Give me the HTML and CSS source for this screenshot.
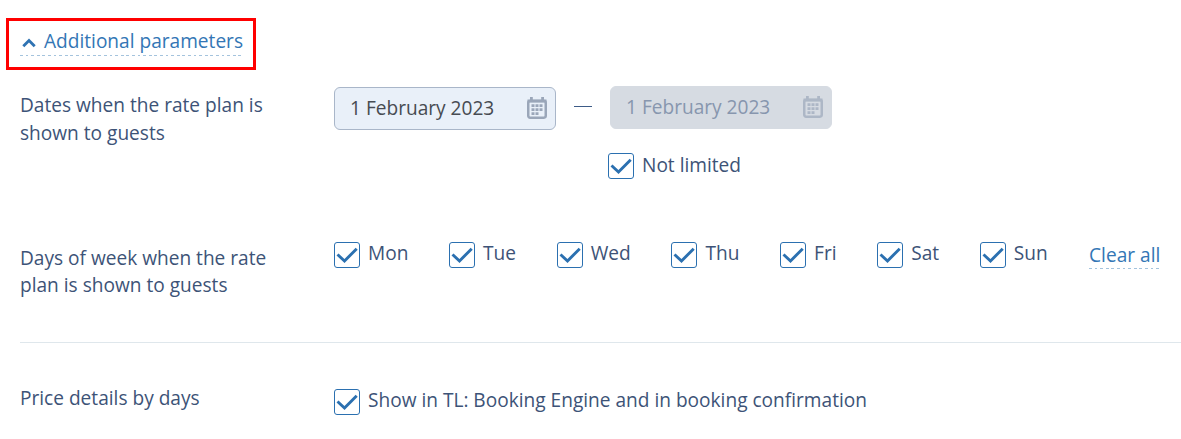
FILE: index.html
```
<!DOCTYPE html>
<html>
	<head>
		<meta charset="UTF-8">
		<title>Rate plan</title>
		<meta name="viewport" content="width=device-width, initial-scale=1.0">
		<link rel="stylesheet" href="styles.css">
	</head>
	<body>
		<svg class="defs">
			<symbol id="check" viewBox="1 1 24 24">
				<path d="M3.5 12.5L10.5 19L22.7 6.7" fill="none" stroke="#2b70b0" stroke-width="2.9"/>
			</symbol>
			<symbol id="calendar" viewBox="0 0 20 22">
				<rect x="1.25" y="4.05" width="17.5" height="16.6" rx="1.8" fill="none" stroke="currentColor" stroke-width="2.5"/>
				<path d="M0.5 4h19M4.4 0v5M15.6 0v5" fill="none" stroke="currentColor" stroke-width="2.8"/>
				<path d="M4.5 8.7h3M8.5 8.7h3M12.5 8.7h3M4.5 12.7h3M8.5 12.7h3M12.5 12.7h3M4.5 16.7h3M8.5 16.7h3" fill="none" stroke="currentColor" stroke-width="2.8"/>
			</symbol>
		</svg>

		<div class="toggle-frame">
			<a class="link toggle">
				<svg class="arrow" viewBox="0 0 14 10"><path d="M1.3 8.3L7 2.6L12.7 8.3" fill="none" stroke="#2f73b3" stroke-width="2.8"/></svg>
				<span>Additional parameters</span>
			</a>
		</div>

		<div class="row row-dates">
			<div class="label">Dates when the rate plan is shown to guests</div>
			<div class="dates">
				<div class="date">
					<span>1 February 2023</span>
					<svg class="calendar"><use href="#calendar"/></svg>
				</div>
				<div class="dash"></div>
				<div class="date-end">
					<div class="date disabled">
						<span>1 February 2023</span>
						<svg class="calendar"><use href="#calendar"/></svg>
					</div>
					<label class="checkbox"><svg class="box"><use href="#check"/></svg><span>Not limited</span></label>
				</div>
			</div>
		</div>

		<div class="row row-days">
			<div class="label">Days of week when the rate plan is shown to guests</div>
			<div class="days">
				<label class="checkbox"><svg class="box"><use href="#check"/></svg><span>Mon</span></label>
				<label class="checkbox"><svg class="box"><use href="#check"/></svg><span>Tue</span></label>
				<label class="checkbox"><svg class="box"><use href="#check"/></svg><span>Wed</span></label>
				<label class="checkbox"><svg class="box"><use href="#check"/></svg><span>Thu</span></label>
				<label class="checkbox"><svg class="box"><use href="#check"/></svg><span>Fri</span></label>
				<label class="checkbox"><svg class="box"><use href="#check"/></svg><span>Sat</span></label>
				<label class="checkbox"><svg class="box"><use href="#check"/></svg><span>Sun</span></label>
				<a class="link clear">Clear all</a>
			</div>
		</div>

		<div class="row row-price">
			<div class="label">Price details by days</div>
			<label class="checkbox"><svg class="box"><use href="#check"/></svg><span>Show in TL: Booking Engine and in booking confirmation</span></label>
		</div>
	</body>
</html>
```
FILE: styles.css
```
*{
	margin: 0;
	padding: 0;
	box-sizing: border-box;
}
body{
	height: 439px;
	padding-top: 18px;
	background: #fff;
	color: #3d5377;
	font: 19.1px/27.5px "Open Sans", sans-serif;
	overflow: hidden;
}
svg{
	display: block;
	flex: none;
}
.defs{
	position: absolute;
	width: 0;
	height: 0;
}
.link{
	color: #3376b5;
	height: 28px;
	white-space: nowrap;
	/* dashed underline */
	background: repeating-linear-gradient(90deg, #a4c3dd 0, #a4c3dd 2.8px, transparent 2.8px, transparent 5.6px) 0 100% / 100% 1px no-repeat;
}
.toggle-frame{
	width: 250px;
	height: 52px;
	margin-left: 6px;
	padding: 7px 0 0 11px;
	border: 3px solid #f00;
}
.toggle{
	display: flex;
	width: 223px;
}
.arrow{
	width: 14px;
	height: 10px;
	margin: 10px 8px 0 2px;
}
.row{
	display: flex;
	margin-left: 20px;
}
.label{
	width: 260px;
	margin-right: 54px;
	flex: none;
}
.row-dates{
	height: 153px;
	padding-top: 22px;
}
.dates{
	display: flex;
	margin-top: -6px;
}
.date{
	display: flex;
	width: 222px;
	height: 43px;
	margin-top: 1px;
	padding: 7px 8px 0 15px;
	justify-content: space-between;
	border: 1px solid #a9b6c9;
	border-radius: 6px;
	background: #e9f0f9;
	color: #474b52;
}
.date.disabled{
	margin: 0 0 24px 2px;
	border-color: #d6dbe2;
	background: #d6dbe2;
	color: #8796ae;
}
.calendar{
	width: 20px;
	height: 22px;
	margin-top: 2px;
	color: #9aa6b9;
}
.disabled .calendar{
	color: #adb7c6;
}
.dash{
	width: 18px;
	height: 1px;
	margin: 20px 16px 0 18px;
	background: #3d5b87;
}
.checkbox{
	display: flex;
	height: 26px;
	white-space: nowrap;
}
.checkbox span{
	margin: -2px 0 0 8px;
}
.date-end .checkbox span{
	margin-top: -1px;
}
.box{
	width: 26px;
	height: 26px;
	border: 1px solid #2b70b0;
	border-radius: 3px;
}
.row-days{
	height: 120px;
	padding-top: 21px;
	border-bottom: 1px solid #dfe7ec;
}
.row-days .label{
	padding-top: 0.5px;
}
.days{
	display: flex;
	margin-top: -2px;
	gap: 40.7px;
}
.clear{
	margin: -1px 0 0 0.7px;
	padding-top: 1px;
}
.row-price{
	padding-top: 42px;
}
.row-price .checkbox{
	margin-top: 4px;
}
```
